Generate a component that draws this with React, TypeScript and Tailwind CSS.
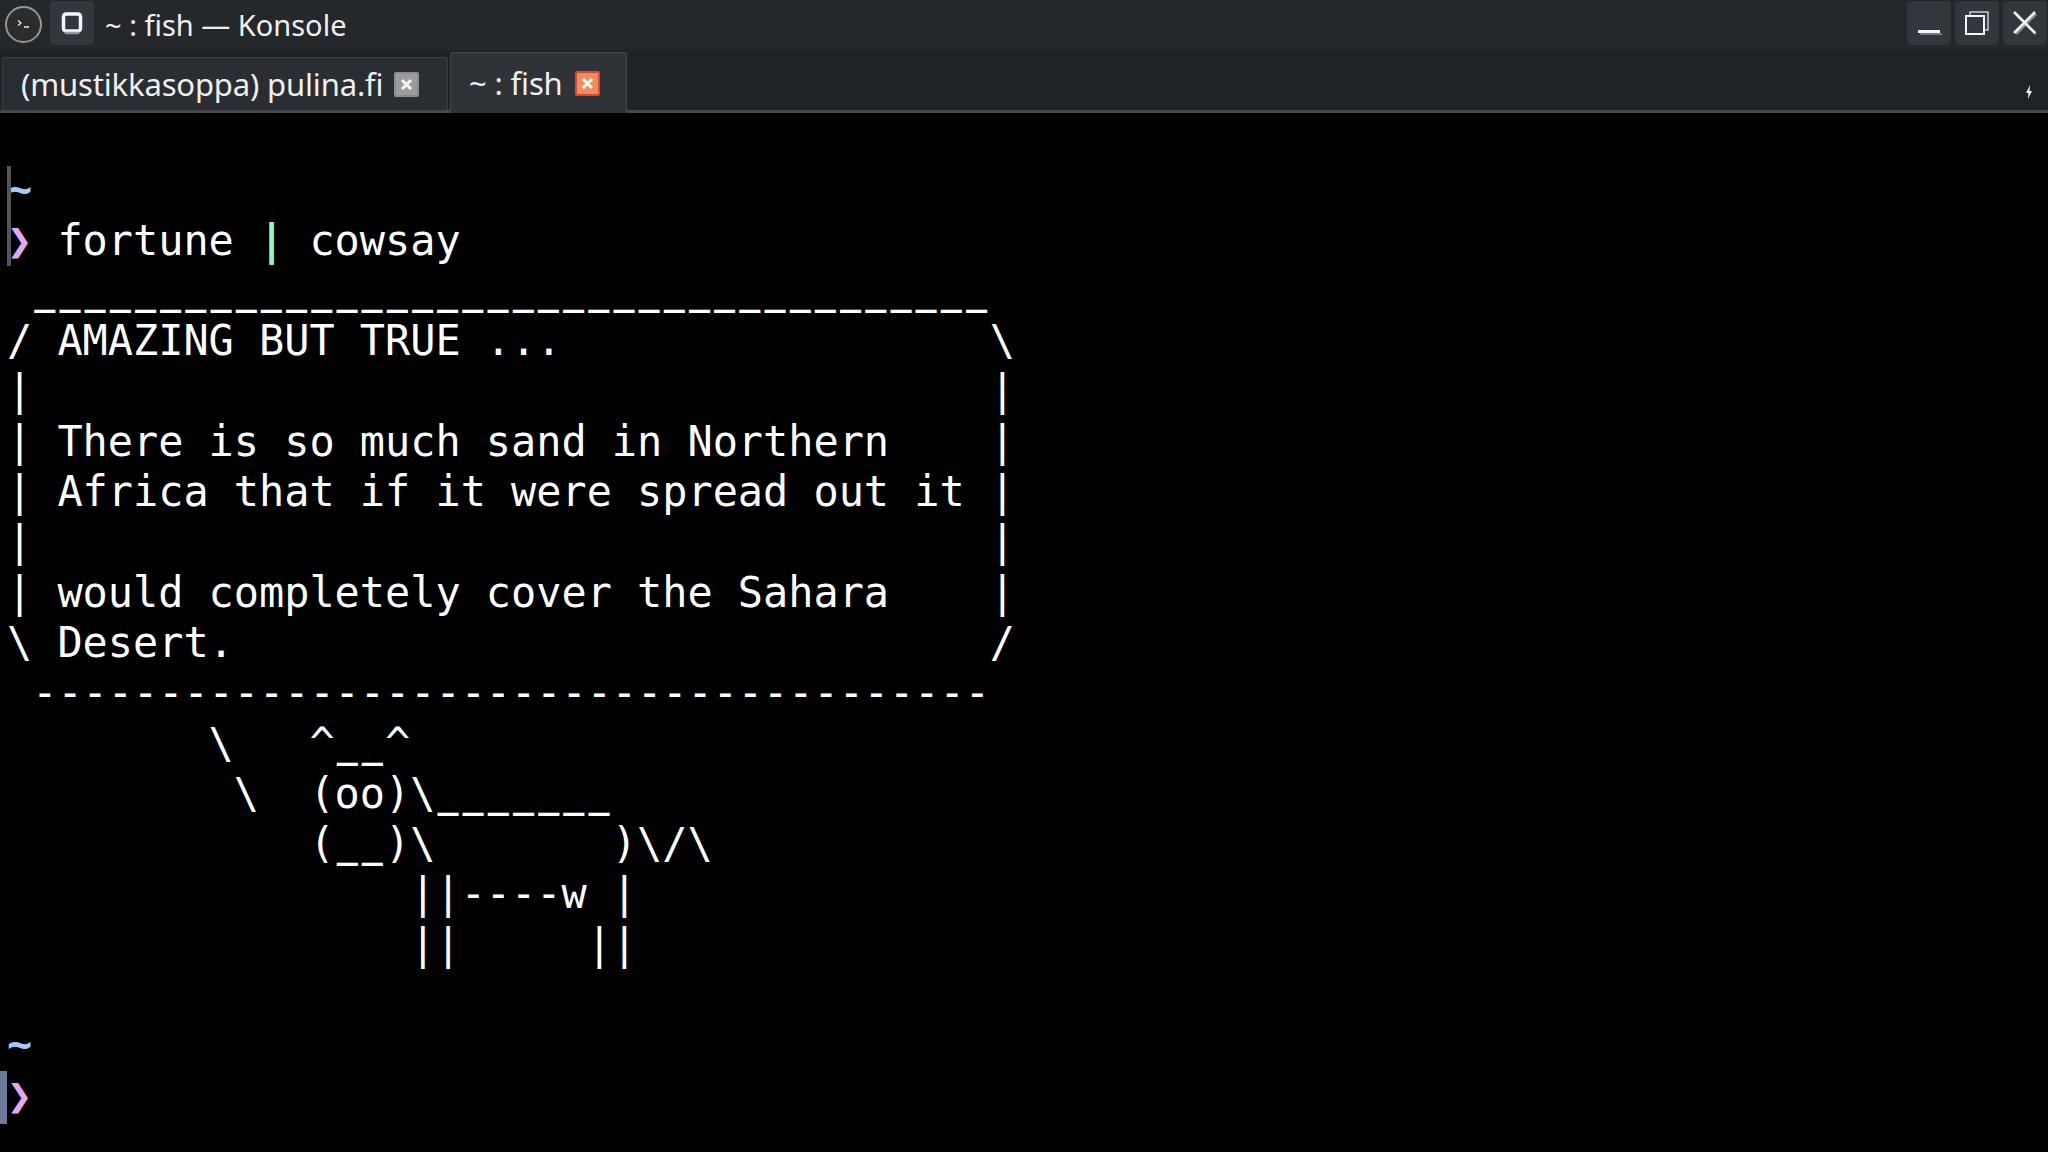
import type { ReactNode } from "react";

const MONO = "font-['DejaVu_Sans_Mono',monospace]";

const box = [
  " ______________________________________",
  "/ AMAZING BUT TRUE ...                 \\",
  "|                                      |",
  "| There is so much sand in Northern    |",
  "| Africa that if it were spread out it |",
  "|                                      |",
  "| would completely cover the Sahara    |",
  "\\ Desert.                              /",
  " --------------------------------------",
  "        \\   ^__^",
  "         \\  (oo)\\_______",
  "            (__)\\       )\\/\\",
  "                ||----w |",
  "                ||     ||",
];

function Row({ children }: { children?: ReactNode }) {
  return <div className="h-[50.3px] whitespace-pre leading-[50.3px]">{children}</div>;
}

// the terminal font draws underscores as separate dashes
function Line({ text }: { text: string }) {
  return (
    <>
      {text.split(/(_+)/).map((part, i) =>
        i % 2 ? (
          <span key={i} className="relative left-[2px] text-[35px] font-bold tracking-[4.11px]">
            {part}
          </span>
        ) : (
          part
        ),
      )}
    </>
  );
}

function Chevron() {
  return <span className="inline-block w-[25.2px] text-[#e3a8f5]">❯</span>;
}

function WinButton({ children }: { children: ReactNode }) {
  return (
    <div className="flex h-[44px] w-[44px] items-center justify-center rounded-[4px] bg-[#31373d]">
      {children}
    </div>
  );
}

function TabClose({ active }: { active?: boolean }) {
  return (
    <span
      className={`flex h-[25px] w-[25px] shrink-0 items-center justify-center rounded-[2px] border-2 ${
        active ? "border-[#e0452f] bg-[#ec8f5f]" : "border-[#8b8e91] bg-[#9a9c9f]"
      }`}
    >
      <svg width="13" height="13" viewBox="0 0 13 13" fill="none" stroke="#f4f5f5" strokeWidth="3">
        <path d="M2 2 11 11M11 2 2 11" />
      </svg>
    </span>
  );
}

export default function App() {
  return (
    <div className="flex h-[1152px] w-[2048px] flex-col overflow-hidden bg-black font-['Noto_Sans',sans-serif] text-[#eff0f1]">
      {/* title bar */}
      <div className="flex h-[50px] shrink-0 items-start bg-[#24282b] pt-[1px]">
        <div className="ml-[5px] mt-[5px] flex h-[37px] w-[37px] shrink-0 items-center justify-center rounded-full border-2 border-[#8f9598] bg-[#2a2c2e]">
          <svg width="16" height="12" viewBox="0 0 16 12" fill="none" stroke="#eff0f1" strokeWidth="1.3">
            <path d="M2 1.5 5 4 2 6.5M8 8h5" />
          </svg>
        </div>
        <div className="ml-[8px] flex h-[44px] w-[44px] shrink-0 items-center justify-center rounded-[4px] bg-[#31373d]">
          <svg width="24" height="24" viewBox="0 0 24 24" fill="none">
            <rect x="3.5" y="3" width="17" height="17" rx="2.5" stroke="#f4f5f5" strokeWidth="3.5" />
            <path d="M5 22h14" stroke="#9a9c9e" strokeWidth="2.5" />
          </svg>
        </div>
        <div className="ml-[11px] text-[29px] leading-[48px]">~ : fish — Konsole</div>
        <div className="ml-auto mr-[1px] flex gap-[4px]">
          <WinButton>
            <svg width="26" height="26" viewBox="0 0 26 26" fill="none">
              <path d="M2 21.5h22" stroke="#f4f5f5" strokeWidth="3" />
              <path d="M4 24h22" stroke="#8d8f91" strokeWidth="1.5" />
            </svg>
          </WinButton>
          <WinButton>
            <svg width="26" height="26" viewBox="0 0 26 26" fill="none">
              <rect x="6" y="2" width="18" height="18" stroke="#c9cbcc" strokeWidth="1.5" />
              <rect x="2" y="6" width="18" height="18" fill="#31373d" stroke="#f4f5f5" strokeWidth="2" />
            </svg>
          </WinButton>
          <WinButton>
            <svg width="26" height="26" viewBox="0 0 26 26" fill="none">
              <path d="M4 4 24 24M24 4 4 24" stroke="#8d8f91" strokeWidth="2.5" />
              <path d="M2 2 23 23M23 2 2 23" stroke="#f4f5f5" strokeWidth="2.5" />
            </svg>
          </WinButton>
        </div>
      </div>

      {/* tab bar */}
      <div className="relative flex h-[63px] shrink-0 items-end border-b-[3px] border-[#43474b] bg-[#1f2326] pl-[2px]">
        <div className="flex h-[53px] w-[446px] shrink-0 items-center whitespace-nowrap rounded-t-[3px] border border-b-0 border-[#3b3f43] bg-[#2a2e32] pl-[18px]">
          <span className="text-[31px] leading-none tracking-[-0.15px]">(mustikkasoppa) pulina.fi</span>
          <span className="ml-[11px]">
            <TabClose />
          </span>
        </div>
        <div className="mb-[-3px] ml-[2px] flex h-[61px] w-[177px] shrink-0 items-center whitespace-nowrap rounded-t-[3px] border border-b-0 border-[#43474b] bg-[#2f3337] pl-[18px]">
          <span className="text-[31px] leading-none tracking-[-0.15px]">~ : fish</span>
          <span className="ml-[12px]">
            <TabClose active />
          </span>
        </div>
        <svg className="absolute bottom-[11px] right-[15px]" width="8" height="14" viewBox="0 0 8 14" fill="#eff0f1">
          <path d="M5 0 1 8h2.5L3 14l4-8H4.5z" />
        </svg>
      </div>

      {/* terminal */}
      <div className={`relative flex-1 pl-[7px] pt-[2px] text-[41.87px] text-white ${MONO}`}>
        <div className="absolute left-[7px] top-[53px] h-[100px] w-[4px] bg-[#555]" />
        <div className="absolute bottom-[28px] left-0 h-[53px] w-[7px] bg-[#6b7a99]" />
        <Row />
        <Row>
          <span className="font-bold text-[#a6c8ff]">~</span>
        </Row>
        <Row>
          <Chevron /> fortune <span className="font-bold text-[#9ff0bf]">|</span> cowsay
        </Row>
        {box.map((line, i) => (
          <Row key={i}>
            <Line text={line} />
          </Row>
        ))}
        <Row />
        <Row>
          <span className="font-bold text-[#a6c8ff]">~</span>
        </Row>
        <Row>
          <Chevron />
        </Row>
      </div>
    </div>
  );
}
